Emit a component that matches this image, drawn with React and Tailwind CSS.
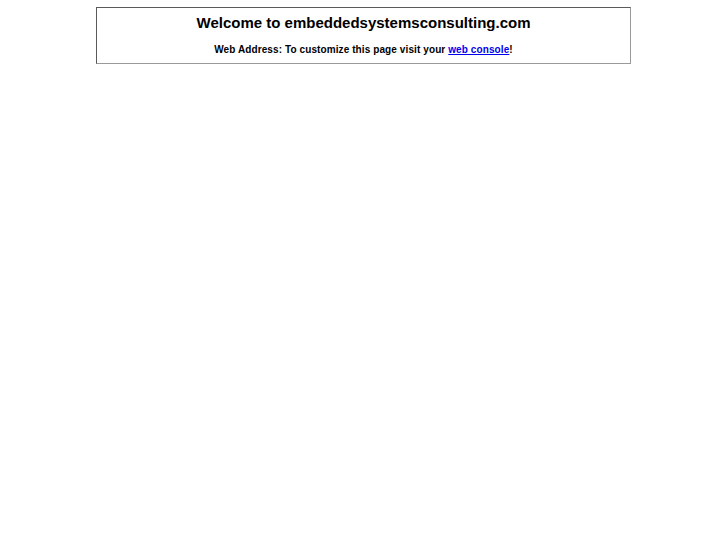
export default function App() {
  return (
    <div className="min-h-[545px] bg-white pt-[7px]" style={{ fontFamily: '"Liberation Sans", Arial, sans-serif' }}>
      <div className="mx-auto w-[535px] border border-[#5a5a5a] border-r-[#9a9a9a] border-b-[#9a9a9a] text-center text-black">
        <div className="pt-[5px] text-[15px] font-bold leading-[19px]">Welcome to embeddedsystemsconsulting.com</div>
        <div className="mt-[11px] pb-[7px] text-[10px] font-bold leading-[13px] tracking-[0.1px]">
          Web Address: To customize this page visit your{" "}
          <a href="#" className="text-[#0000ee] underline">web console</a>!
        </div>
      </div>
    </div>
  );
}
